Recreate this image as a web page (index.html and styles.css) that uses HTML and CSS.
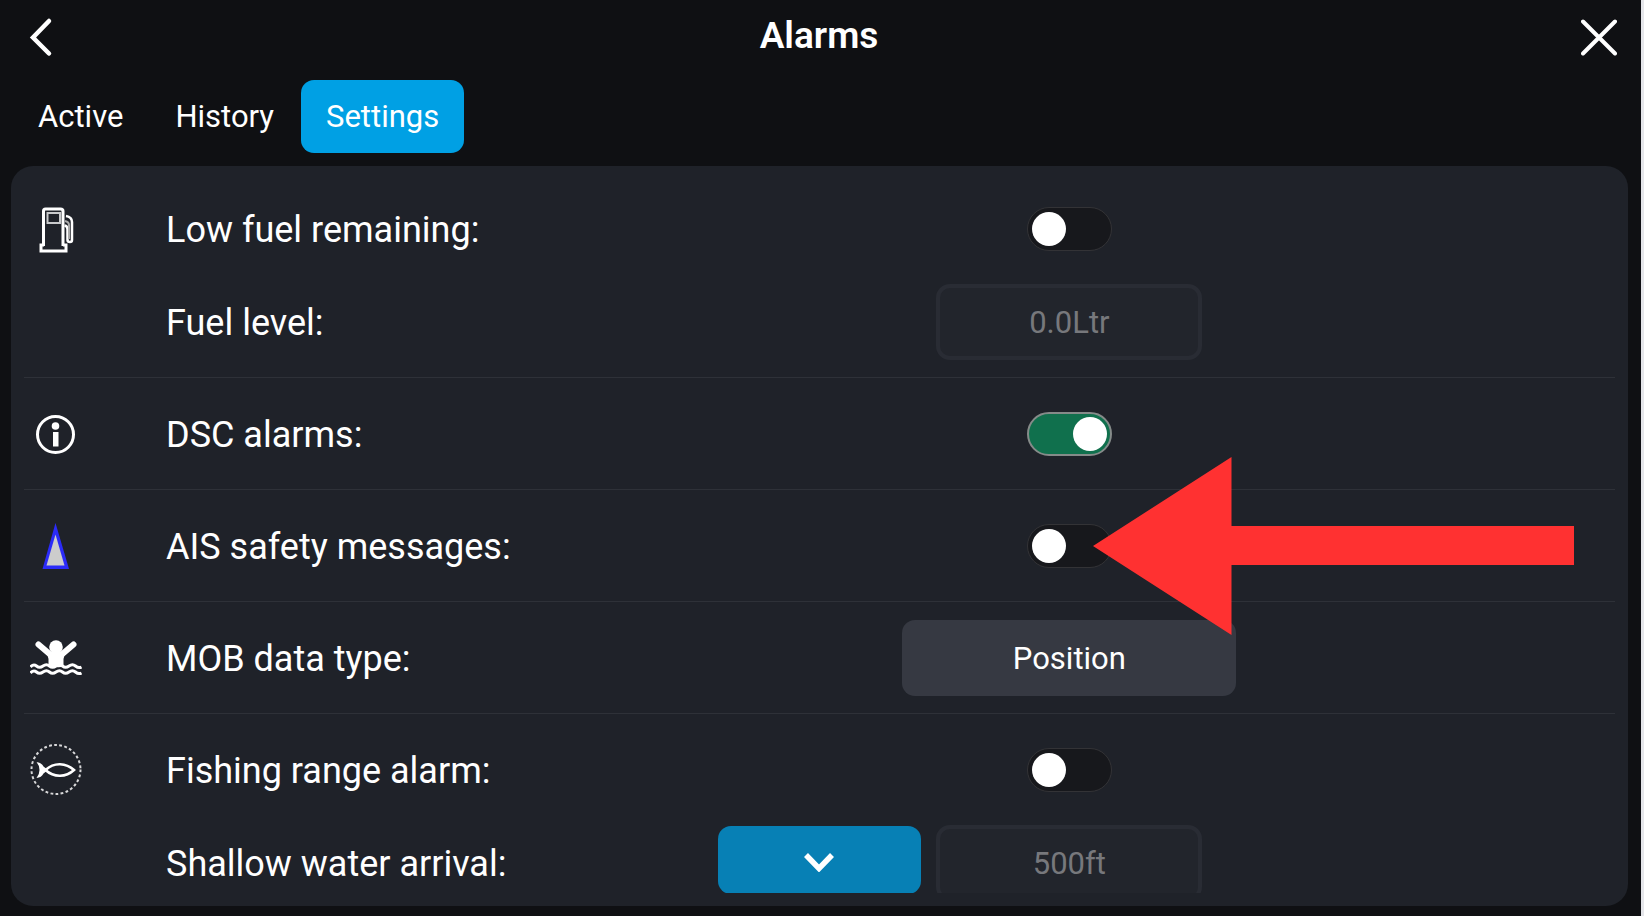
FILE: index.html
```html
<!DOCTYPE html>
<html lang="en">
<head>
<meta charset="utf-8">
<title>Alarms</title>
<link rel="stylesheet" href="styles.css">
</head>
<body>
<main class="screen">
  <header class="header">
    <button class="icon-button" aria-label="Back">
      <svg width="36" height="40" viewBox="0 0 36 40"><path d="M28 4 12 20.500l16 16" fill="none" stroke="#fff" stroke-width="4.500" stroke-linecap="round"/></svg>
    </button>
    <h1 class="title">Alarms</h1>
    <button class="icon-button" aria-label="Close">
      <svg width="36" height="40" viewBox="0 0 36 40"><path d="M2 4.500l32 32M34 4.500l-32 32" fill="none" stroke="#fff" stroke-width="4" stroke-linecap="round"/></svg>
    </button>
  </header>

  <nav class="tabs">
    <button class="tab">Active</button>
    <button class="tab">History</button>
    <button class="tab tab-selected" aria-current="page">Settings</button>
  </nav>

  <section class="panel">
    <div class="list">
      <div class="group">
        <div class="row">
          <svg class="icon" viewBox="0 0 52 52" fill="none" stroke="#fff">
            <path d="M13.500 43V8q0-2 2-2h15q2.500 0 2.500 2v35" stroke-width="3"/>
            <path d="M14 42h-3v6h25v-6h-3" stroke-width="3"/>
            <path d="M17.500 10h12.500v10H17.500z" stroke="#c9cacc" stroke-width="2"/>
            <path d="M36 13q6 1 6 6V37q0 2-2 2-2.500 0-2.500-2V26q0-3-3-3.500" stroke-width="2.500"/>
            <path d="M35 18q4 1 4 4v14" stroke="#aaa" stroke-width="2"/>
          </svg>
          <label class="label" for="low-fuel">Low fuel remaining:</label>
          <div class="control"><input class="toggle" type="checkbox" id="low-fuel"></div>
        </div>
        <div class="row">
          <label class="label" for="fuel-level">Fuel level:</label>
          <div class="control"><input class="field" type="text" id="fuel-level" value="0.0Ltr" disabled></div>
        </div>
      </div>

      <div class="group">
        <div class="row">
          <svg class="icon" viewBox="0 0 52 52">
            <circle cx="25.500" cy="26.500" r="18" fill="none" stroke="#fff" stroke-width="3"/>
            <circle cx="25.500" cy="18" r="3.800" fill="#fff"/>
            <path d="M23 24h5.500v14.500H23z" fill="#fff"/>
          </svg>
          <label class="label" for="dsc">DSC alarms:</label>
          <div class="control"><input class="toggle" type="checkbox" id="dsc" checked></div>
        </div>
      </div>

      <div class="group">
        <div class="row">
          <svg class="icon" viewBox="0 0 52 52">
            <path d="M25.500 3 39 49H12.500z" fill="#2b2bf8"/>
            <path d="M25.500 14.500 34.500 45.500h-18z" fill="#ccc"/>
          </svg>
          <label class="label" for="ais">AIS safety messages:</label>
          <div class="control">
            <input class="toggle" type="checkbox" id="ais">
            <svg class="pointer" width="481" height="178" viewBox="0 0 481 178" aria-hidden="true"><path d="M0 89 138.500 0v69H481v39H138.500v70z" fill="#ff3131"/></svg>
          </div>
        </div>
      </div>

      <div class="group">
        <div class="row">
          <svg class="icon" viewBox="0 0 52 52" fill="none" stroke="#fff">
            <circle cx="26" cy="15" r="6.800" fill="#fff" stroke="none"/>
            <path d="M8.500 12.500 22 24M43.500 12.500 30 24" stroke-width="6" stroke-linecap="round"/>
            <path d="M17 21l9-2 9 2-1.500 6v7q-3.500 2-7.500 1-4 1-7.500-1v-7z" fill="#fff" stroke="none"/>
            <path d="M.5 35q3-3.500 6-1t6.500 0 6.500 0 6.500 0 6.500 0 6.500 0 6.500 0 6 1M.5 41q3-3.500 6-1t6.500 0 6.500 0 6.500 0 6.500 0 6.500 0 6.500 0 6 1" stroke-width="3"/>
          </svg>
          <span class="label" id="mob-label">MOB data type:</span>
          <div class="control"><button class="choice" aria-describedby="mob-label">Position</button></div>
        </div>
      </div>

      <div class="group">
        <div class="row">
          <svg class="icon" viewBox="0 0 52 52" fill="none" stroke="#fff">
            <circle cx="26" cy="25.500" r="24.500" stroke="#d8d8d9" stroke-width="2" stroke-dasharray="2.800 2.330"/>
            <path d="M15.500 26Q22 20 30 20.200q8 .3 14 5.800-6 5.500-14 5.800Q22 32 15.500 26z" stroke-width="2.600"/>
            <path d="M6.500 18q5 .5 7 4.500l4.500 3.500-4.500 3.500q-2 4-7 4.500 3-3.500 3-8t-3-8z" fill="#fff" stroke="none"/>
          </svg>
          <label class="label" for="fishing">Fishing range alarm:</label>
          <div class="control"><input class="toggle" type="checkbox" id="fishing"></div>
        </div>
        <div class="row">
          <label class="label" for="shallow">Shallow water arrival:</label>
          <div class="control">
            <button class="expand" aria-label="More options">
              <svg width="32" height="20" viewBox="0 0 32 20"><path d="M3 3 16 16.500 29 3" fill="none" stroke="#fff" stroke-width="5.500"/></svg>
            </button>
            <input class="field" type="text" id="shallow" value="500ft" disabled>
          </div>
        </div>
      </div>
    </div>
  </section>
</main>
</body>
</html>
```
FILE: styles.css
```css
* {
  box-sizing: border-box;
}

body {
  margin: 0;
  background: #e5e6ea;
  color: #fff;
  font-family: Roboto, "Liberation Sans", sans-serif;
}

button,
input {
  margin: 0;
  font: inherit;
  color: inherit;
}

button {
  border: 0;
  padding: 0;
  background: none;
  cursor: pointer;
}

.screen {
  display: flex;
  flex-direction: column;
  height: 100vh;
  margin-right: 3px;
  padding: 0 13px 10px 11px;
  background: #0f1013;
}

.header {
  flex: none;
  display: flex;
  align-items: center;
  justify-content: space-between;
  height: 80px;
  padding: 0 11px 6px 10px;
}

.icon-button {
  display: flex;
}

.title {
  margin: 0;
  padding-bottom: 2px;
  font-size: 37px;
  font-weight: 600;
  line-height: 44px;
}

.tabs {
  flex: none;
  display: flex;
  gap: 2px;
  margin-bottom: 13px;
  padding-left: 2px;
}

.tab {
  height: 73px;
  padding: 0 25px;
  border-radius: 13px;
  font-size: 31px;
}

.tab-selected {
  background: #00a0e4;
}

.panel {
  flex: 1;
  min-height: 0;
  display: flex;
  padding: 13px;
  border-radius: 22px;
  background: #1f2229;
}

.list {
  flex: 1;
  overflow: hidden;
}

.group {
  display: grid;
  gap: 17px;
  padding: 18px 0 17px;
  border-bottom: 1px solid #2e3138;
}

.group:first-child {
  padding-top: 12px;
}

.row {
  display: grid;
  grid-template-columns: 142px 552fr 704fr 194fr;
  align-items: center;
  min-height: 76px;
}

.icon {
  width: 52px;
  height: 52px;
  margin-left: 6px;
}

.label {
  grid-column: 2;
  padding-top: 2px;
  font-size: 36px;
  line-height: 42px;
  white-space: nowrap;
}

.control {
  grid-column: 3;
  position: relative;
  display: grid;
  grid-template-columns: minmax(0, 1fr) auto minmax(0, 1fr);
  align-items: start;
}

.toggle {
  grid-column: 2;
  appearance: none;
  display: flex;
  align-items: center;
  width: 85px;
  height: 44px;
  padding: 0 4px;
  border: 1px solid #333336;
  border-radius: 22px;
  background: #17181c;
}

.toggle::before {
  content: "";
  width: 34px;
  height: 34px;
  border-radius: 50%;
  background: #fff;
}

.toggle:checked {
  justify-content: flex-end;
  border-width: 2px;
  padding: 0 3px;
  border-color: #858b89;
  background: #10704d;
}

.field {
  grid-column: 2;
  width: 266px;
  height: 76px;
  border: 4px solid #292c34;
  border-radius: 14px;
  background: #22252c;
  color: #77787c;
  font-size: 31px;
  text-align: center;
}

.choice {
  grid-column: 2;
  width: 334px;
  height: 76px;
  border-radius: 13px;
  background: #363942;
  font-size: 31px;
}

.expand {
  display: grid;
  place-items: center;
  width: 203px;
  height: 68px;
  margin-top: 1px;
  padding-top: 3px;
  border-radius: 13px;
  background: #0780b5;
}

.pointer {
  position: absolute;
  z-index: 1;
  top: 50%;
  left: 50%;
  margin-left: 24px;
  transform: translateY(-50%);
  pointer-events: none;
}
```
